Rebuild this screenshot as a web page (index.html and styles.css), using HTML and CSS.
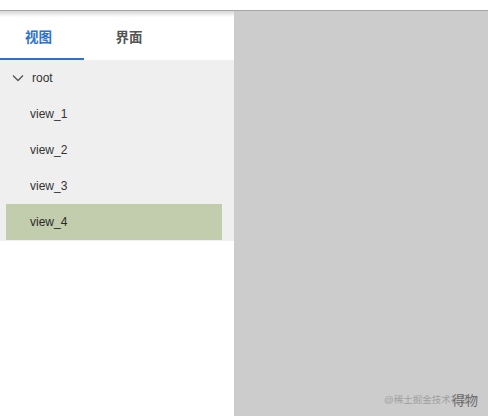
FILE: index.html
```html
<!DOCTYPE html>
<html>
<head>
<meta charset="utf-8">
<link rel="stylesheet" href="styles.css">
</head>
<body>
<div class="topbar"></div>
<div class="main">
  <aside class="sidebar">
    <div class="tabs">
      <div class="tab active">视图</div>
      <div class="tab second">界面</div>
    </div>
    <div class="tree">
      <div class="row root">
        <svg class="chev" width="12" height="8" viewBox="0 0 12 8"><path d="M1 1.5 L6 6.5 L11 1.5" fill="none" stroke="#555" stroke-width="1.3"/></svg>
        <span>root</span>
      </div>
      <div class="row child">view_1</div>
      <div class="row child">view_2</div>
      <div class="row child">view_3</div>
      <div class="row child selected">view_4</div>
    </div>
  </aside>
  <section class="canvas">
    <div class="watermark"><span class="wm1">@稀土掘金技术社区</span><span class="wm2">得物</span></div>
  </section>
</div>
</body>
</html>
```
FILE: styles.css
```css
* { box-sizing: border-box; }
html, body { margin: 0; padding: 0; width: 488px; height: 416px; overflow: hidden; background: #fff; font-family: "Liberation Sans", Arial, "Noto Sans CJK SC", sans-serif; }
.topbar { height: 11px; background: #fff; border-bottom: 1px solid #a4a4a4; }
.main { display: flex; height: 405px; }
.sidebar { width: 234px; background: #fff; background-image: linear-gradient(#d6d6d6, #ffffff 6px); background-repeat: no-repeat; background-size: 100% 8px; }
.tabs { display: flex; height: 49px; }
.tab { width: 84px; display: flex; align-items: center; justify-content: center; font-size: 13.5px; font-weight: bold; color: #555; border-bottom: 2px solid transparent; padding-top: 2px; }
.tab.active { color: #2e72c8; border-bottom-color: #2e72c8; padding-right: 7px; }
.tab.second { padding-left: 6px; }
.tree { background: #efefef; padding-bottom: 1px; }
.row { height: 36px; display: flex; align-items: center; font-size: 12px; color: #333; }
.root { padding-left: 12px; }
.root .chev { margin-right: 8px; }
.child { padding-left: 24px; margin: 0 12px 0 6px; }
.selected { background: #c2cdae; color: #2a2a2a; }
.canvas { flex: 1; background: #cccccc; position: relative; }
.watermark { position: absolute; left: 150px; bottom: 9px; white-space: nowrap; }
.wm1 { color: #a0a0a0; font-size: 9.5px; }
.wm2 { position: absolute; left: 68px; bottom: -2px; color: #6a6a6a; font-size: 13px; }
```
